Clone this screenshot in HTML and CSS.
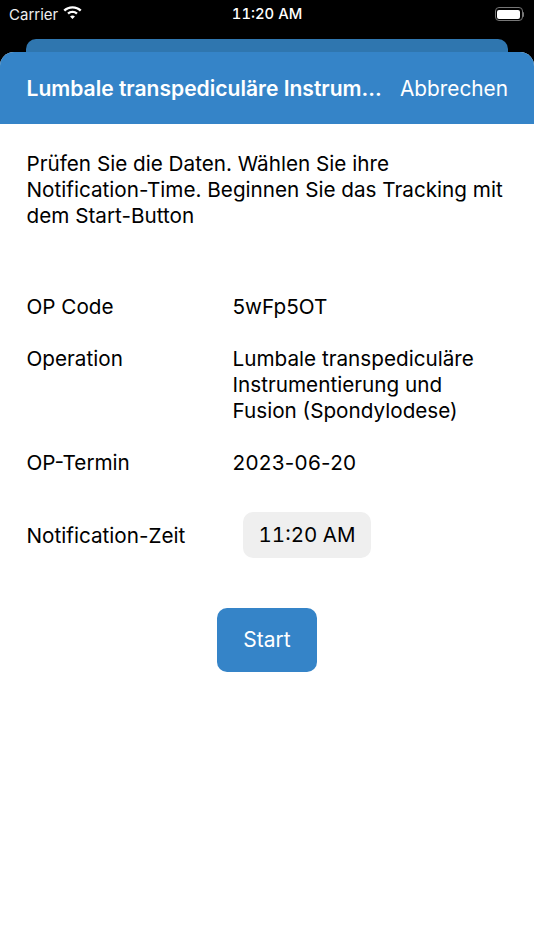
FILE: index.html
```html
<!DOCTYPE html>
<html lang="de">
<head>
<meta charset="utf-8">
<title>Tracking</title>
<link rel="stylesheet" href="styles.css">
</head>
<body>
<div class="screen">
  <header class="statusbar">
    <div class="carrier"><span>Carrier</span>
      <svg class="wifi" width="19" height="14" viewBox="0 0 18 13"><path fill="#fff" d="M9 0C5.600 0 2.600 1.300.4 3.400l1.600 1.700C3.800 3.400 6.300 2.300 9 2.300s5.200 1.100 7 2.800l1.600-1.700C15.400 1.300 12.400 0 9 0zM9 4.300c-1.900 0-3.600.7-5 1.900l1.600 1.700C6.500 7.100 7.700 6.600 9 6.600s2.500.5 3.400 1.300L14 6.200C12.600 5 10.900 4.300 9 4.300zM9 8.800c-.9 0-1.700.3-2.300.9L9 12.300l2.300-2.600c-.6-.6-1.400-.9-2.300-.9z"/></svg>
    </div>
    <div class="clock">11:20 AM</div>
    <div class="battery"><span class="battery-body"><span class="battery-fill"></span></span><span class="battery-cap"></span></div>
  </header>
  <div class="sheet-back"></div>
  <main class="sheet">
    <div class="navbar">
      <h1 class="nav-title">Lumbale transpediculäre Instrum...</h1>
      <span class="nav-action">Abbrechen</span>
    </div>
    <div class="content">
      <p class="intro">Prüfen Sie die Daten. Wählen Sie ihre Notification-Time. Beginnen Sie das Tracking mit dem Start-Button</p>
      <dl class="details">
        <div class="row"><dt>OP Code</dt><dd>5wFp5OT</dd></div>
        <div class="row"><dt>Operation</dt><dd>Lumbale transpediculäre Instrumentierung und Fusion (Spondylodese)</dd></div>
        <div class="row"><dt>OP-Termin</dt><dd class="date">2023-06-20</dd></div>
      </dl>
      <div class="notify">
        <span class="notify-label">Notification-Zeit</span>
        <span class="time-pill">11:20 AM</span>
      </div>
      <div class="actions"><button class="start">Start</button></div>
    </div>
  </main>
</div>
</body>
</html>
```
FILE: styles.css
```css
* { box-sizing: border-box; }
html, body { margin: 0; padding: 0; }
body { width: 534px; height: 950px; overflow: hidden; background: #000; font-family: Inter, "Liberation Sans", sans-serif; color: #000; }
.screen { width: 534px; height: 950px; display: flex; flex-direction: column; background: #000; }
.statusbar { height: 39px; padding: 0 10px 0 9px; display: flex; align-items: flex-start; position: relative; color: #fff; flex: none; }
.carrier { display: flex; align-items: center; gap: 5px; height: 28px; font-size: 15px; color: #eee; }
.wifi { margin-top: -2px; }
.clock { position: absolute; left: 0; right: 0; top: 5px; text-align: center; font-size: 14.800px; font-weight: 500; line-height: 18px; font-variant-numeric: tabular-nums; }
.battery { margin-left: auto; display: flex; align-items: center; height: 28px; }
.battery-body { width: 28px; height: 14px; border: 1px solid #777; border-radius: 4px; padding: 1.500px; display: block; }
.battery-fill { display: block; width: 100%; height: 100%; background: #fff; border-radius: 2px; }
.battery-cap { width: 1.500px; height: 5px; background: #777; border-radius: 0 1px 1px 0; }
.sheet-back { height: 13px; margin: 0 26px; background: #2f76af; border-radius: 10px 10px 0 0; flex: none; }
.sheet { flex: 1; background: #fff; border-radius: 14px 14px 0 0; overflow: hidden; display: flex; flex-direction: column; }
.navbar { height: 72px; background: #3584c8; display: flex; align-items: center; justify-content: space-between; padding: 0 26px 0 26.500px; color: #fff; flex: none; }
.nav-title { margin: 0; font-size: 21.050px; font-weight: 600; white-space: nowrap; }
.nav-action { font-size: 20.800px; font-weight: 400; }
.content { padding: 27px 26px 0 26.500px; font-size: 20.700px; line-height: 26px; }
.intro { margin: 0; }
.details { margin: 65px 0 0; }
.row { display: flex; margin-bottom: 26px; }
.row dt { width: 206px; flex: none; }
.row dd { margin: 0; flex: 1; padding-right: 30px; }
.row .date { letter-spacing: .3px; }
.notify { display: flex; align-items: center; margin-top: 36px; height: 46px; }
.notify-label { width: 216.500px; flex: none; padding-top: 1px; }
.time-pill { width: 128px; height: 46px; background: #efefef; border-radius: 10px; display: flex; align-items: center; justify-content: center; font-size: 20.500px; font-variant-numeric: tabular-nums; }
.actions { display: flex; justify-content: center; margin-top: 50px; margin-left: -.5px; }
.start { width: 100px; height: 64px; border: 0; border-radius: 10px; background: #3584c8; color: #fff; font: inherit; font-size: 21px; }
```
